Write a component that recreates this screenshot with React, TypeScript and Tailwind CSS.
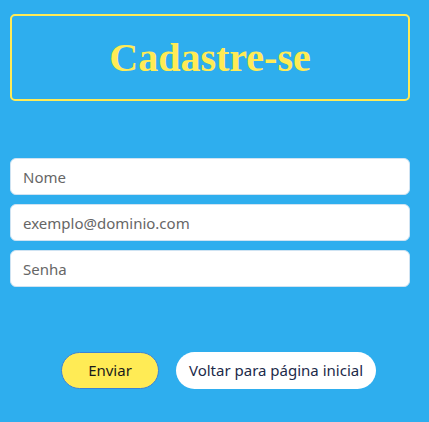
export default function App() {
  return (
    <div className="min-h-[422px] w-full bg-[#2eaeee] pt-[14px] pl-[10px] pr-[19px] font-['Noto_Sans',sans-serif]">
      {/* Title box */}
      <div className="h-[87px] rounded-[5px] border-2 border-[#ffeb55] flex items-center justify-center">
        <h1 className="font-['Liberation_Serif',serif] font-bold text-[40px] leading-none text-[#ffeb55]">
          Cadastre-se
        </h1>
      </div>

      {/* Form */}
      <form className="mt-[57px] flex flex-col gap-[9px]" onSubmit={(e) => e.preventDefault()}>
        <input
          type="text"
          placeholder="Nome"
          className="h-[37px] w-full rounded-[6px] border border-[#cfe3f2] bg-white px-[12px] text-[15px] text-gray-800 placeholder-[#666] focus:outline-none"
        />
        <input
          type="email"
          placeholder="exemplo@dominio.com"
          className="h-[37px] w-full rounded-[6px] border border-[#cfe3f2] bg-white px-[12px] text-[15px] text-gray-800 placeholder-[#666] focus:outline-none"
        />
        <input
          type="password"
          placeholder="Senha"
          className="h-[37px] w-full rounded-[6px] border border-[#cfe3f2] bg-white px-[12px] text-[15px] text-gray-800 placeholder-[#666] focus:outline-none"
        />

        <div className="mt-[56px] flex items-center gap-[17px] pl-[51px]">
          <button
            type="submit"
            className="h-[37px] w-[98px] rounded-full border border-[#3b82d6] bg-[#ffeb55] text-[15px] text-[#1a1a1a]"
          >
            Enviar
          </button>
          <button
            type="button"
            className="h-[37px] w-[200px] rounded-full bg-white text-[15px] text-[#1c2a4a]"
          >
            Voltar para página inicial
          </button>
        </div>
      </form>
    </div>
  );
}
